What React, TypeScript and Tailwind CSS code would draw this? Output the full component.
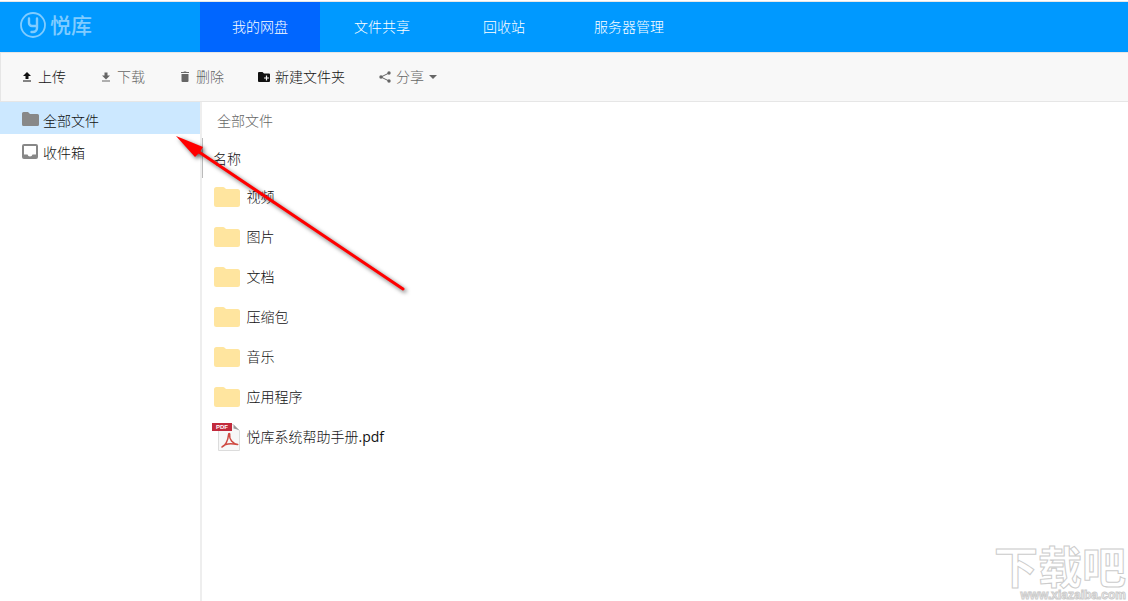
import type { ReactNode } from "react"

const tabs = ["我的网盘", "文件共享", "回收站", "服务器管理"]

const folders = ["视频", "图片", "文档", "压缩包", "音乐", "应用程序"]

function Logo() {
  return (
    <a href="#" className="flex h-full w-[200px] items-center gap-1 pb-1 pl-5 text-[#80ccff]">
      <svg width="26" height="26" viewBox="0 0 26 26" fill="none" stroke="currentColor" strokeWidth="2.4" strokeLinecap="round">
        <circle cx="13" cy="13" r="12" strokeWidth="1.8" />
        <path d="M9 6.500v4.500a3 3 0 0 0 3 3h4.500M17 6.500v9.500a4 4 0 0 1-4 4h-1.500" />
      </svg>
      <span className="text-[21px] leading-6 font-medium">悦库</span>
    </a>
  )
}

function FolderIcon() {
  return (
    <svg width="26" height="20" viewBox="0 0 26 20" fill="#ffe59f">
      <path d="M2.500 0H9q1 0 1.700.7L12 2h11.500A2.500 2.500 0 0 1 26 4.500v13a2.500 2.500 0 0 1-2.500 2.500h-21A2.500 2.500 0 0 1 0 17.500v-15A2.500 2.500 0 0 1 2.500 0z" />
    </svg>
  )
}

function PdfIcon() {
  return (
    <svg width="28" height="28" viewBox="0 0 28 28">
      <path d="M6.500 1.500h15l6 6v20h-21z" fill="#f7f7f7" stroke="#dcdcdc" />
      <path d="M21.500 1.500l6 6q-3-1.500-6-2z" fill="#9a9a9a" />
      <path d="M10 24c3-1 6-6 6.500-12 0-2 1.500-2 1.200 0-.7 4 3 9 8 9.500M10 24c3-3.500 9-4 15.500-2.500" fill="none" stroke="#cf4a42" strokeWidth="1.500" strokeLinecap="round" />
      <path d="M0 0h20v8H0z" fill="#c22a3c" />
      <text x="4" y="6" fontSize="6" fontWeight="bold" fontFamily="Liberation Sans, sans-serif" fill="#fff">PDF</text>
    </svg>
  )
}

function ToolButton({ icon, label, muted, caret }: { icon: ReactNode; label: string; muted?: boolean; caret?: boolean }) {
  return (
    <button type="button" className={`flex items-center gap-[5px] ${muted ? "text-[#666]" : "text-[#111]"}`}>
      {icon}
      {label}
      {caret && (
        <svg width="8" height="4" viewBox="0 0 8 4" fill="currentColor">
          <path d="M0 0h8L4 4z" />
        </svg>
      )}
    </button>
  )
}

function Toolbar() {
  return (
    <div className="flex h-[50px] items-center gap-[34px] border-y border-l border-[#e6e6e6] bg-[#f8f8f8] pl-5">
      <ToolButton
        label="上传"
        icon={
          <svg width="12" height="12" viewBox="0 0 12 12" fill="currentColor">
            <path d="M6 1l4 4H7.500v3h-3V5H2zM2 9.500h8v1H2z" />
          </svg>
        }
      />
      <ToolButton
        muted
        label="下载"
        icon={
          <svg width="12" height="12" viewBox="0 0 12 12" fill="currentColor">
            <path d="M6 8.500l4-4H7.500v-3h-3v3H2zM2 9.500h8v1H2z" />
          </svg>
        }
      />
      <ToolButton
        muted
        label="删除"
        icon={
          <svg width="12" height="12" viewBox="0 0 12 12" fill="currentColor">
            <path d="M2 1h2.500l.5-.5h2l.5.500H10v1H2zM2.500 3h7v7q0 1-1 1h-5q-1 0-1-1z" />
          </svg>
        }
      />
      <ToolButton
        label="新建文件夹"
        icon={
          <svg width="12" height="12" viewBox="0 0 12 12">
            <path d="M1 1h3.500L6 2.500h5q1 0 1 1V10q0 1-1 1H1q-1 0-1-1V2q0-1 1-1z" fill="currentColor" />
            <path d="M8.500 4.500v5M6 7h5" stroke="#f8f8f8" strokeWidth="1.200" />
          </svg>
        }
      />
      <ToolButton
        muted
        caret
        label="分享"
        icon={
          <svg width="12" height="12" viewBox="0 0 12 12" fill="currentColor">
            <path d="M10 2L2 6l8 4" fill="none" stroke="currentColor" />
            <circle cx="10" cy="2" r="1.700" />
            <circle cx="2" cy="6" r="1.700" />
            <circle cx="10" cy="10" r="1.700" />
          </svg>
        }
      />
    </div>
  )
}

function Sidebar() {
  return (
    <nav className="w-[202px] shrink-0 border-r-2 border-[#eee]">
      <a href="#" className="flex h-8 items-center gap-1 bg-[#cce8ff] pt-1.5 pl-[22px]">
        <svg width="17" height="14" viewBox="0 0 17 14" fill="#888" className="mb-1">
          <path d="M1.500 0H6l2 2h7.500Q17 2 17 3.500v9q0 1.500-1.500 1.500h-14Q0 14 0 12.500v-11Q0 0 1.500 0z" />
        </svg>
        全部文件
      </a>
      <a href="#" className="flex h-8 items-center gap-1 pt-1.5 pl-[22px]">
        <svg width="17" height="15" viewBox="0 0 17 15" className="mb-1">
          <path d="M2 0h12q2 0 2 2v11q0 2-2 2H2q-2 0-2-2V2q0-2 2-2zM2 2v8.500h3.500q.5 2 2.500 2t2.500-2H14V2z" fill="#888" fillRule="evenodd" />
        </svg>
        收件箱
      </a>
    </nav>
  )
}

function FileList() {
  return (
    <main className="flex-1">
      <div className="flex h-9 items-center pt-0.5 pl-[15px] text-[#666]">全部文件</div>
      <table className="w-full text-left">
        <thead>
          <tr className="h-10">
            <th className="border-l border-[#bbb] pt-0.5 pl-[10px] font-light">名称</th>
          </tr>
        </thead>
        <tbody>
          {folders.map((name) => (
            <tr key={name} className="h-10">
              <td className="pl-[11px]">
                <a href="#" className="flex items-center gap-[7px] pb-0.5">
                  <FolderIcon />
                  {name}
                </a>
              </td>
            </tr>
          ))}
          <tr className="h-10">
            <td className="pl-[9px]">
              <a href="#" className="flex items-center gap-[7px] pb-0.5">
                <PdfIcon />
                <span>
                  悦库系统帮助手册<span className="font-normal">.pdf</span>
                </span>
              </a>
            </td>
          </tr>
        </tbody>
      </table>
    </main>
  )
}

function Arrow() {
  return (
    <svg width="250" height="175" viewBox="0 0 250 175" className="pointer-events-none absolute top-[128px] left-[168px] drop-shadow-[2px_2px_2px_rgba(0,0,0,0.6)]">
      <path d="M28 22L235 161" stroke="#f00" strokeWidth="3" strokeLinecap="round" />
      <path d="M8 8L35 19L32 24L30 26L27 29z" fill="#f00" />
    </svg>
  )
}

function Watermark() {
  return (
    <div className="pointer-events-none absolute right-0 bottom-0 flex flex-col items-end pr-0.5 font-bold text-white">
      <span className="text-[44px] leading-[44px] [-webkit-text-stroke:1px_#ccc]">下载吧</span>
      <span className="font-['Liberation_Sans',sans-serif] text-xs leading-3 [-webkit-text-stroke:1px_#ccc]">www.xiazaiba.com</span>
    </div>
  )
}

export default function App() {
  return (
    <div className="relative flex min-h-screen flex-col bg-white font-['Open_Sans','Noto_Sans_CJK_SC',sans-serif] text-sm font-light text-[#111]">
      <header className="mt-px flex h-[51px] items-stretch border-t border-[#e6e6e6] bg-[#09f]">
        <Logo />
        <nav className="flex gap-0.5">
          {tabs.map((tab, i) => (
            <a key={tab} href="#" className={`flex min-w-[120px] items-center justify-center px-7 text-white ${i === 0 ? "bg-[#06f]" : ""}`}>
              {tab}
            </a>
          ))}
        </nav>
      </header>
      <Toolbar />
      <div className="flex flex-1">
        <Sidebar />
        <FileList />
      </div>
      <Arrow />
      <Watermark />
    </div>
  )
}
